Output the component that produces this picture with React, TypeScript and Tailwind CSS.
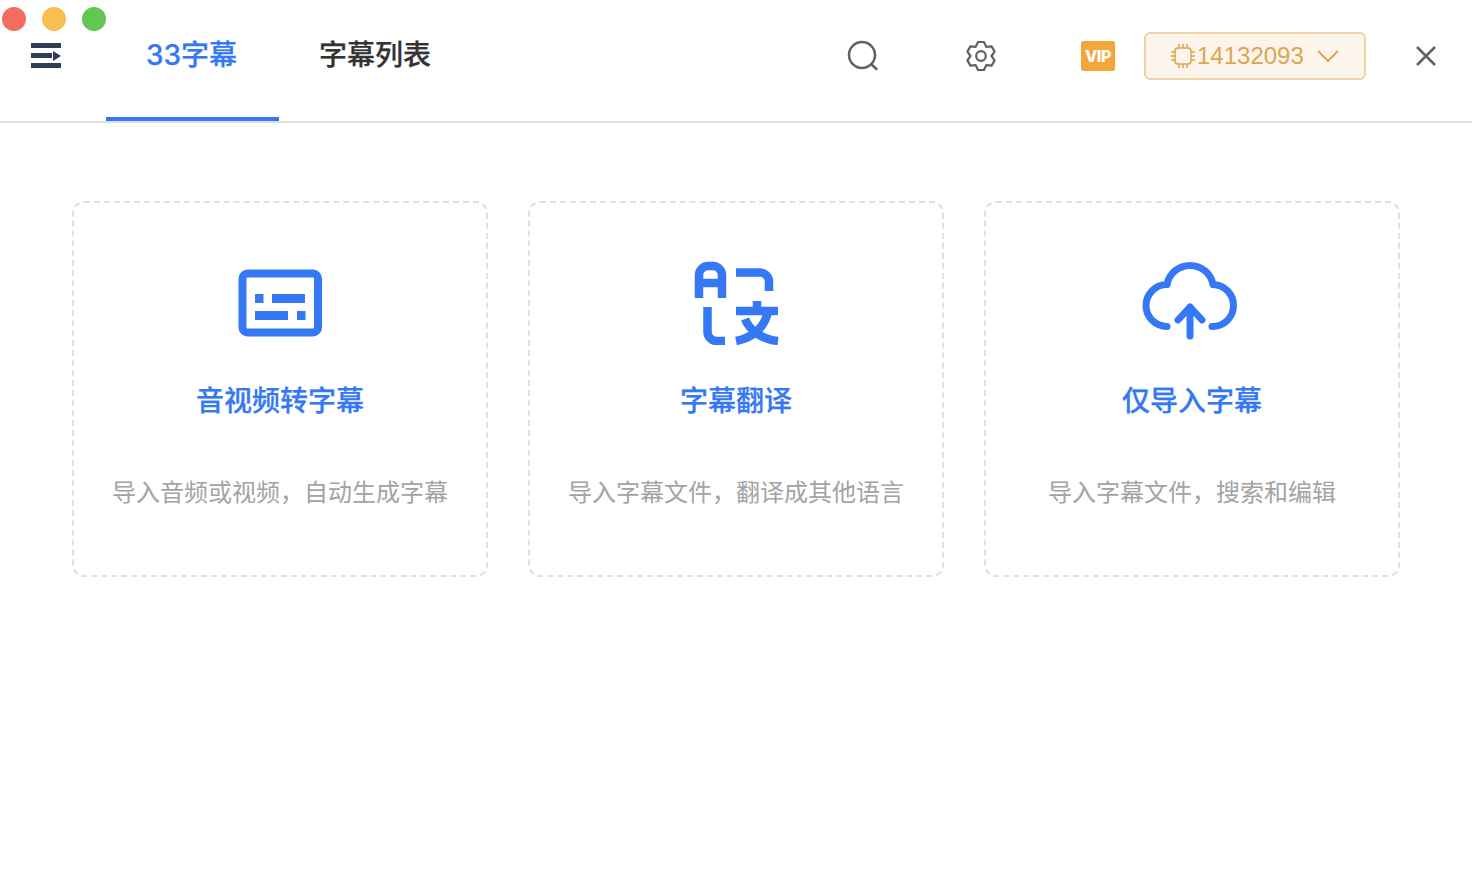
const cjk = "font-['Liberation_Sans','Noto_Sans_CJK_SC',sans-serif]";

function SubtitleIcon() {
  return (
    <svg width="100" height="90" viewBox="230 255 100 90" fill="none">
      <rect x="242.500" y="273.500" width="75.500" height="59" rx="5" stroke="#3478f6" strokeWidth="8" />
      <path
        d="M255 294h8.500v9H255zM272 294h33v9h-33zM255 311h33v9h-33zM297 311h8.500v9H297z"
        fill="#3478f6"
      />
    </svg>
  );
}

function TranslateIcon() {
  return (
    <svg width="100" height="90" viewBox="686 255 100 90" fill="none">
      <g stroke="#3478f6" strokeWidth="8.500">
        <path d="M699 298V275a9 9 0 0 1 9-9h5a9 9 0 0 1 9 9V298" />
        <path d="M699 283h23" />
        <path d="M736 272.500h24a9 9 0 0 1 9 9V291" />
        <path d="M707.500 307V332a9 9 0 0 0 9 9H725" />
        <path d="M757 301v10M736 311h42" />
        <path d="M736 341C752 338 765 328 768 311" />
        <path d="M745 319C749 329 760 339 778 341" />
      </g>
    </svg>
  );
}

function CloudIcon() {
  return (
    <svg width="100" height="90" viewBox="1142 255 100 90" fill="none">
      <g stroke="#3478f6" strokeWidth="7" strokeLinecap="round" strokeLinejoin="round">
        <path d="M1167 326.500A21 21 0 0 1 1167 284.500A23.400 23.400 0 0 1 1213 284.500A21 21 0 0 1 1212 326.500" />
        <path d="M1190 336V307M1178 320L1190 307L1202 320" />
      </g>
    </svg>
  );
}

function ChipIcon() {
  return (
    <svg width="26" height="26" viewBox="0 0 26 26" fill="none" stroke="#dda54f" strokeWidth="1.500">
      <rect x="5" y="5" width="16" height="16" rx="3" />
      <path d="M9 1v4M13 1v4M17 1v4M9 21v4M13 21v4M17 21v4M1 9h4M1 13h4M1 17h4M21 9h4M21 13h4M21 17h4" />
    </svg>
  );
}

function GearIcon() {
  return (
    <svg className="ml-[87px] mt-[40px]" width="32" height="32" viewBox="0 0 32 32" fill="none" stroke="#5f6166" strokeWidth="2.200" strokeLinejoin="round">
      <path d="M13 2H19L21.250 6.900L26.600 6.400L29.600 11.600L26.500 16L29.600 20.400L26.600 25.600L21.250 25.100L19 30H13L10.750 25.100L5.400 25.600L2.400 20.400L5.500 16L2.400 11.600L5.400 6.400L10.750 6.900Z" />
      <circle cx="16" cy="16" r="4.800" />
    </svg>
  );
}

const cards = [
  { title: "音视频转字幕", desc: "导入音频或视频，自动生成字幕", icon: <SubtitleIcon /> },
  { title: "字幕翻译", desc: "导入字幕文件，翻译成其他语言", icon: <TranslateIcon /> },
  { title: "仅导入字幕", desc: "导入字幕文件，搜索和编辑", icon: <CloudIcon /> },
];

export default function App() {
  return (
    <div className={`relative h-[896px] w-[1472px] overflow-hidden bg-white ${cjk}`}>
      {/* Window buttons */}
      <div className="absolute left-[2px] top-[7px] flex gap-4">
        <span className="h-6 w-6 rounded-full bg-[#f26d5f]" />
        <span className="h-6 w-6 rounded-full bg-[#f6bf4f]" />
        <span className="h-6 w-6 rounded-full bg-[#62c655]" />
      </div>

      {/* Header */}
      <header className="flex h-[123px] items-stretch border-b-2 border-[#dedfe3]">
        <div className="ml-[31px] mr-[45px] flex w-[30px] items-start pt-[43px]">
          <svg width="30" height="26" viewBox="0 0 30 26" fill="#2f3e55">
            <path d="M0 0h30v5H0zM0 10h21v5H0zM0 20h30v5H0zM22 8l8 5-8 5z" />
          </svg>
        </div>

        <nav className="flex font-['Inter','Noto_Sans_CJK_SC',sans-serif]">
          <div className="w-[173px] border-b-4 border-[#3478f6] pl-10 pt-[35px] text-[28px] leading-10 font-medium text-[#3478f6] [-webkit-text-stroke:0.25px_#3478f6]">
            33字幕
          </div>
          <div className="pl-10 pt-[35px] text-[28px] leading-10 font-medium text-[#333333] [-webkit-text-stroke:0.25px_#333333]">
            字幕列表
          </div>
        </nav>

        <div className="ml-auto mr-[34px] flex items-start">
          <svg className="mt-[39px]" width="32" height="32" viewBox="0 0 32 32" fill="none" stroke="#5f6166" strokeWidth="2.500" strokeLinecap="round">
            <circle cx="16" cy="16" r="13" />
            <path d="M26 26l4.500 4" />
          </svg>
          <GearIcon />
          <div className="ml-[84px] mt-[41px] flex h-[30px] w-[34px] items-center justify-center rounded-[2px] bg-[#f4a63a] font-['Inter',sans-serif] text-[16px] leading-none font-extrabold tracking-tight text-white">
            VIP
          </div>
          <button className="ml-[29px] mt-[32px] flex h-12 w-[222px] items-center rounded-[6px] border-2 border-[#eed3a5] bg-[#fdf5eb] pl-[24px] text-2xl text-[#dda54f]">
            <ChipIcon />
            <span className="ml-px">14132093</span>
            <svg className="ml-[13px]" width="22" height="12" viewBox="0 0 22 12" fill="none" stroke="#dda54f" strokeWidth="2">
              <path d="M1 1l10 10L21 1" />
            </svg>
          </button>
          <svg className="ml-12 mt-[44px]" width="24" height="24" viewBox="0 0 24 24" fill="none" stroke="#5f6166" strokeWidth="2.500">
            <path d="M3 3l18 18M21 3L3 21" />
          </svg>
        </div>
      </header>

      {/* Cards */}
      <main className="mt-[78px] grid grid-cols-3 gap-10 px-[72px]">
        {cards.map((card) => (
          <div
            key={card.title}
            className="flex h-[376px] flex-col items-center rounded-[12px] border-2 border-dashed border-[#dfe0e3] pt-[52px]"
          >
            {card.icon}
            <h2 className="mt-[37px] text-[28px] leading-10 font-medium text-[#3478f6] [-webkit-text-stroke:0.25px_#3478f6]">{card.title}</h2>
            <p className="mt-[53px] text-2xl leading-9 text-[#a3a3a3]">{card.desc}</p>
          </div>
        ))}
      </main>
    </div>
  );
}
